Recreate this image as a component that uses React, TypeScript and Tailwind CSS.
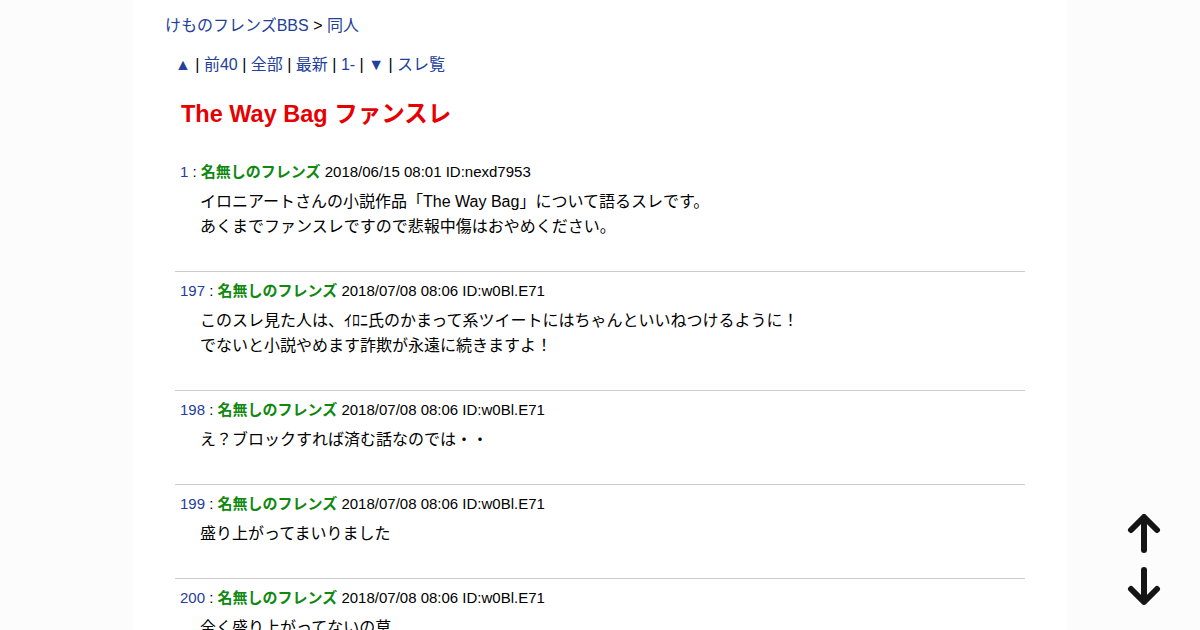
import React from 'react'

const POSTS = [
  {
    no: 1,
    date: '2018/06/15 08:01 ID:nexd7953',
    lines: ['イロニアートさんの小説作品「The Way Bag」について語るスレです。', 'あくまでファンスレですので悲報中傷はおやめください。'],
  },
  {
    no: 197,
    date: '2018/07/08 08:06 ID:w0Bl.E71',
    lines: ['このスレ見た人は、ｲﾛﾆ氏のかまって系ツイートにはちゃんといいねつけるように！', 'でないと小説やめます詐欺が永遠に続きますよ！'],
  },
  { no: 198, date: '2018/07/08 08:06 ID:w0Bl.E71', lines: ['え？ブロックすれば済む話なのでは・・'] },
  { no: 199, date: '2018/07/08 08:06 ID:w0Bl.E71', lines: ['盛り上がってまいりました'] },
  { no: 200, date: '2018/07/08 08:06 ID:w0Bl.E71', lines: ['全く盛り上がってないの草'] },
]

const LINK = 'text-[#23409a]'

function Sep() {
  return <span className="text-black"> | </span>
}

export default function App() {
  return (
    <div
      className="min-h-[630px] bg-[#fcfcfc] text-black"
      style={{ fontFamily: '"Liberation Sans", "Noto Sans CJK JP", sans-serif' }}
    >
      <div className="mx-auto w-[934px] min-h-[630px] bg-white pt-[16px]">
        {/* breadcrumb */}
        <div className="pl-[32px] text-[16px] leading-[20px]">
          <span className={LINK}>けものフレンズBBS</span>
          <span> &gt; </span>
          <span className={LINK}>同人</span>
        </div>

        {/* nav */}
        <div className="mt-[19px] pl-[42px] text-[16px] leading-[20px]">
          <span className={LINK}>▲</span>
          <Sep />
          <span className={LINK}>前40</span>
          <Sep />
          <span className={LINK}>全部</span>
          <Sep />
          <span className={LINK}>最新</span>
          <Sep />
          <span className={LINK}>1-</span>
          <Sep />
          <span className={LINK}>▼</span>
          <Sep />
          <span className={LINK}>スレ覧</span>
        </div>

        <h1 className="mt-[24px] pl-[48px] text-[23.5px] leading-[30px] font-bold text-[#e60000]">
          The Way Bag ファンスレ
        </h1>

        <div className="mt-[24px] ml-[42px] w-[850px]">
          {POSTS.map((p, i) => (
            <div key={p.no} className={`pt-[7px] pb-[32px] ${i > 0 ? 'border-t border-[#cccccc]' : ''}`}>
              <div className="pl-[5px] text-[15px] leading-[24px]">
                <span className={LINK}>{p.no}</span>
                <span> : </span>
                <span className="font-bold text-[#118811]">名無しのフレンズ</span>
                <span> {p.date}</span>
              </div>
              <div className="mt-[5px] pl-[25px] text-[16px] leading-[25px]">
                {p.lines.map((l, j) => (
                  <div key={j}>{l}</div>
                ))}
              </div>
            </div>
          ))}
        </div>
      </div>

      {/* scroll arrows */}
      <div className="fixed right-[36px] bottom-[24px] flex flex-col gap-[12px]">
        <svg width="40" height="40" viewBox="0 0 40 40" fill="none" stroke="#151515" strokeWidth="6" strokeLinecap="round" strokeLinejoin="round">
          <path d="M20 36V4M7 16L20 3L33 16" />
        </svg>
        <svg width="40" height="40" viewBox="0 0 40 40" fill="none" stroke="#151515" strokeWidth="6" strokeLinecap="round" strokeLinejoin="round">
          <path d="M20 4V35M7 23L20 36L33 23" />
        </svg>
      </div>
    </div>
  )
}
